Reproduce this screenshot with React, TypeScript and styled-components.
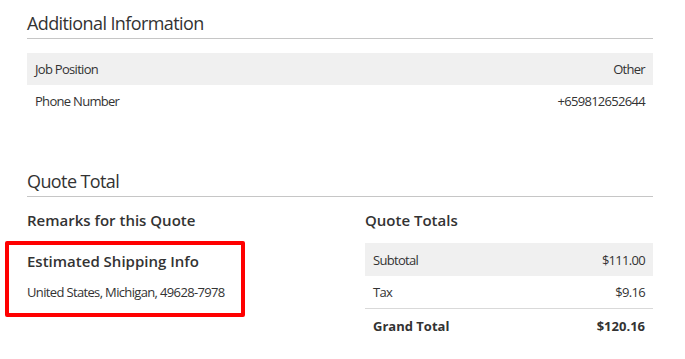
import React from "react";
import styled, { createGlobalStyle } from "styled-components";

const Global = createGlobalStyle`
  html, body { margin: 0; padding: 0; background: #fff; }
  body { font-family: "Open Sans", "Noto Sans", sans-serif; color: #333; }
`;

const Page = styled.div`
  padding: 11px 32px 0 27px;
`;

const Section = styled.section<{ $gap?: number }>`
  margin-bottom: ${(p) => p.$gap ?? 0}px;
`;

const SectionTitle = styled.h2`
  margin: 0;
  font-size: 18px;
  font-weight: 400;
  letter-spacing: -0.6px;
  line-height: 24px;
  padding-bottom: 3px;
  border-bottom: 1px solid #c6c6c6;
  color: #333;
`;

const Table = styled.div<{ $top: number }>`
  margin-top: ${(p) => p.$top}px;
  display: flex;
  flex-direction: column;
`;

const Row = styled.div<{ $shaded?: boolean; $line?: boolean; $bold?: boolean; $h?: number }>`
  display: flex;
  justify-content: space-between;
  align-items: center;
  box-sizing: border-box;
  height: ${(p) => p.$h ?? 32}px;
  padding: 0 8px;
  font-size: 13px;
  letter-spacing: ${(p) => (p.$bold ? "0" : "-0.7px")};
  color: #333;
  background: ${(p) => (p.$shaded ? "#f0f0f0" : "transparent")};
  border-bottom: ${(p) => (p.$line ? "1px solid #d9d9d9" : "none")};
  font-weight: ${(p) => (p.$bold ? 700 : 400)};
`;

const Columns = styled.div`
  display: grid;
  grid-template-columns: 338px 1fr;
  margin-top: 11px;
`;

const SubTitle = styled.h3`
  margin: 0;
  font-size: 15px;
  font-weight: 600;
  line-height: 24px;
  color: #333;
`;

const Highlight = styled.div`
  box-sizing: border-box;
  margin: 9px 0 0 -22px;
  width: 240px;
  border: 4px solid #f00;
  border-radius: 2px;
  padding: 4px 0 11px 18px;
`;

const Address = styled.p`
  margin: 9px 0 0;
  font-size: 13px;
  letter-spacing: -0.65px;
  line-height: 20px;
  color: #333;
`;

const RightCol = styled.div`
  padding-left: 0;
`;

export default function App() {
  return (
    <>
      <Global />
      <Page>
        <Section $gap={52}>
          <SectionTitle>Additional Information</SectionTitle>
          <Table $top={14}>
            <Row $shaded>
              <span>Job Position</span>
              <span>Other</span>
            </Row>
            <Row>
              <span>Phone Number</span>
              <span>+659812652644</span>
            </Row>
          </Table>
        </Section>
        <Section>
          <SectionTitle>Quote Total</SectionTitle>
          <Columns>
            <div>
              <SubTitle>Remarks for this Quote</SubTitle>
              <Highlight>
                <SubTitle>Estimated Shipping Info</SubTitle>
                <Address>United States, Michigan, 49628-7978</Address>
              </Highlight>
            </div>
            <RightCol>
              <SubTitle>Quote Totals</SubTitle>
              <Table $top={11}>
                <Row $shaded $h={33}>
                  <span>Subtotal</span>
                  <span>$111.00</span>
                </Row>
                <Row $line $h={33}>
                  <span>Tax</span>
                  <span>$9.16</span>
                </Row>
                <Row $bold $h={33}>
                  <span>Grand Total</span>
                  <span>$120.16</span>
                </Row>
              </Table>
            </RightCol>
          </Columns>
        </Section>
      </Page>
    </>
  );
}
